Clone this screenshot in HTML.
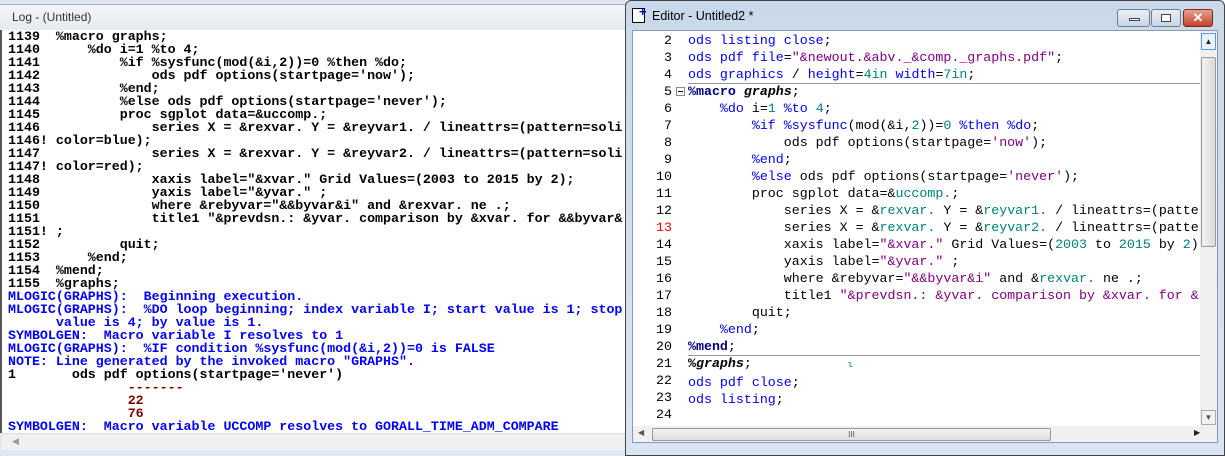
<!DOCTYPE html>
<html><head><meta charset="utf-8"><style>
*{margin:0;padding:0;box-sizing:border-box}
body{width:1225px;height:456px;overflow:hidden;background:#fff;position:relative;font-family:"Liberation Sans",sans-serif}
.abs{position:absolute}
.log div{font-family:"Liberation Mono",monospace;font-weight:bold;font-size:13.3px;line-height:13px;height:13px;white-space:pre;position:absolute;left:8px;color:#000}
.b{color:#0000ff!important}.r{color:#800000!important}
.ed{font-family:"Liberation Mono",monospace;font-size:13.3px;line-height:17px;white-space:pre;position:absolute;left:688px;top:32px;color:#000}
.gut{font-family:"Liberation Mono",monospace;font-size:13.3px;line-height:17px;white-space:pre;position:absolute;left:640px;top:32px;width:32px;text-align:right;color:#000}
.k{color:#0000ff}.s{color:#800080}.t{color:#008080}.m{color:#000080;font-weight:bold}.i{font-style:italic;font-weight:bold}
.btn{position:absolute;top:9px;height:18px;border:1px solid #6d7f96;border-radius:3px;background:linear-gradient(#eaf0f7,#c7d4e4)}
</style></head><body>
<div class="abs" style="left:0;top:0;width:626px;height:456px;background:#dfe7f0"></div>
<div class="abs" style="left:0;top:4px;width:626px;height:26px;background:linear-gradient(#f3f5f8,#e6eaef);border-top:1px solid #aab"></div>
<div class="abs" style="left:12px;top:10px;font-size:12px;color:#333">Log - (Untitled)</div>
<div class="abs" style="left:0;top:30px;width:626px;height:403px;background:#fff;border-left:2px solid #555"></div>
<div class="abs" style="left:2px;top:433px;width:624px;height:17px;background:#f0f0f0;border-top:1px solid #ddd"></div>
<div class="abs" style="left:12px;top:436px;font-size:9px;color:#999">◀</div>
<div class="log">
<div style="top:29.5px">1139  %macro graphs;</div>
<div style="top:42.5px">1140      %do i=1 %to 4;</div>
<div style="top:55.5px">1141          %if %sysfunc(mod(&amp;i,2))=0 %then %do;</div>
<div style="top:68.5px">1142              ods pdf options(startpage='now');</div>
<div style="top:81.5px">1143          %end;</div>
<div style="top:94.5px">1144          %else ods pdf options(startpage='never');</div>
<div style="top:107.5px">1145          proc sgplot data=&amp;uccomp.;</div>
<div style="top:120.5px">1146              series X = &amp;rexvar. Y = &amp;reyvar1. / lineattrs=(pattern=soli</div>
<div style="top:133.5px">1146! color=blue);</div>
<div style="top:146.5px">1147              series X = &amp;rexvar. Y = &amp;reyvar2. / lineattrs=(pattern=soli</div>
<div style="top:159.5px">1147! color=red);</div>
<div style="top:172.5px">1148              xaxis label="&amp;xvar." Grid Values=(2003 to 2015 by 2);</div>
<div style="top:185.5px">1149              yaxis label="&amp;yvar." ;</div>
<div style="top:198.5px">1150              where &amp;rebyvar="&amp;&amp;byvar&amp;i" and &amp;rexvar. ne .;</div>
<div style="top:211.5px">1151              title1 "&amp;prevdsn.: &amp;yvar. comparison by &amp;xvar. for &amp;&amp;byvar&amp;</div>
<div style="top:224.5px">1151! ;</div>
<div style="top:237.5px">1152          quit;</div>
<div style="top:250.5px">1153      %end;</div>
<div style="top:263.5px">1154  %mend;</div>
<div style="top:276.5px">1155  %graphs;</div>
<div class="b" style="top:289.5px">MLOGIC(GRAPHS):  Beginning execution.</div>
<div class="b" style="top:302.5px">MLOGIC(GRAPHS):  %DO loop beginning; index variable I; start value is 1; stop</div>
<div class="b" style="top:315.5px">      value is 4; by value is 1.</div>
<div class="b" style="top:328.5px">SYMBOLGEN:  Macro variable I resolves to 1</div>
<div class="b" style="top:341.5px">MLOGIC(GRAPHS):  %IF condition %sysfunc(mod(&amp;i,2))=0 is FALSE</div>
<div class="b" style="top:354.5px">NOTE: Line generated by the invoked macro "GRAPHS".</div>
<div style="top:367.5px">1       ods pdf options(startpage='never')</div>
<div class="r" style="top:380.5px">               -------</div>
<div class="r" style="top:393.5px">               22</div>
<div class="r" style="top:406.5px">               76</div>
<div class="b" style="top:419.5px">SYMBOLGEN:  Macro variable UCCOMP resolves to GORALL_TIME_ADM_COMPARE</div>
</div>

<div class="abs" style="left:625px;top:0;width:600px;height:456px;background:linear-gradient(#c9d9ea,#d9e5f1);border:1px solid #444;border-radius:6px 6px 0 0"></div>
<div class="abs" style="left:632px;top:8px;width:13px;height:15px;background:#fff;border:1px solid #000"></div>
<div class="abs" style="left:639px;top:4px;font-size:13px;font-weight:bold;color:#00c">+</div>
<div class="abs" style="left:652px;top:9px;font-size:12.5px;color:#000">Editor - Untitled2 *</div>
<div class="btn" style="left:1117px;width:33px"><div class="abs" style="left:11px;top:8px;width:11px;height:3px;background:#fff;border:1px solid #444"></div></div>
<div class="btn" style="left:1151px;width:30px"><div class="abs" style="left:9px;top:4px;width:10px;height:8px;background:#fff;border:1px solid #444"></div></div>
<div class="btn" style="left:1183px;width:30px;background:linear-gradient(#e8a08e,#c2432b);border-color:#7a2b1e;color:#fff;font-weight:bold;font-size:13px;text-align:center;line-height:16px">✕</div>
<div class="abs" style="left:632px;top:30px;width:586px;height:413px;background:#fff;border:1px solid #8a99ad"></div>
<div class="abs" style="left:1200px;top:31px;width:17px;height:395px;background:#f0f0f0"></div>
<div class="abs" style="left:1201px;top:33px;width:15px;height:17px;background:#e8f2fb;border:1px solid #5b9ad6;font-size:8px;text-align:center;line-height:15px;color:#123">▲</div>
<div class="abs" style="left:1201px;top:57px;width:15px;height:190px;background:linear-gradient(90deg,#f2f2f2,#dadada);border:1px solid #999;border-radius:2px"></div>
<div class="abs" style="left:1201px;top:410px;width:15px;height:15px;background:#f2f2f2;border:1px solid #aaa;font-size:8px;text-align:center;line-height:13px;color:#555">▼</div>
<div class="abs" style="left:633px;top:426px;width:584px;height:16px;background:#f0f0f0"></div>
<div class="abs" style="left:638px;top:428px;font-size:8px;color:#555">◀</div>
<div class="abs" style="left:1194px;top:428px;font-size:8px;color:#222">▶</div>
<div class="abs" style="left:652px;top:428px;width:399px;height:13px;background:linear-gradient(#f4f4f4,#dcdcdc);border:1px solid #999;border-radius:2px;font-size:8px;text-align:center;line-height:11px;color:#555">III</div>
<div class="abs" style="left:688px;top:83px;width:512px;height:1px;background:#999"></div>
<div class="abs" style="left:688px;top:355px;width:512px;height:1px;background:#999"></div>
<div class="abs" style="left:676px;top:87px;width:9px;height:9px;border:1px solid #888;background:#fff"><div class="abs" style="left:1px;top:3px;width:5px;height:1px;background:#000"></div></div>
<div class="gut">2
3
4
5
6
7
8
9
10
11
12
<span style="color:#f00">13</span>
14
15
16
17
18
19
20
21
22
23
24</div>
<div class="ed"><span class="k">ods listing close</span>;
<span class="k">ods pdf file</span>=<span class="s">"&amp;newout.&amp;abv._&amp;comp._graphs.pdf"</span>;
<span class="k">ods graphics</span> / <span class="k">height</span>=<span class="t">4in</span> <span class="k">width</span>=<span class="t">7in</span>;
<span class="m">%macro</span> <span class="i">graphs</span>;
    <span class="k">%do</span> i=<span class="t">1</span> <span class="k">%to</span> <span class="t">4</span>;
        <span class="k">%if</span> <span class="k">%sysfunc</span>(mod(&amp;i,<span class="t">2</span>))=<span class="t">0</span> <span class="k">%then</span> <span class="k">%do</span>;
            ods pdf options(startpage=<span class="s">'now'</span>);
        <span class="k">%end</span>;
        <span class="k">%else</span> ods pdf options(startpage=<span class="s">'never'</span>);
        proc sgplot data=&amp;<span class="t">uccomp.</span>;
            series X = &amp;<span class="t">rexvar.</span> Y = &amp;<span class="t">reyvar1.</span> / lineattrs=(patte
            series X = &amp;<span class="t">rexvar.</span> Y = &amp;<span class="t">reyvar2.</span> / lineattrs=(patte
            xaxis label=<span class="s">"&amp;xvar."</span> Grid Values=(<span class="t">2003</span> to <span class="t">2015</span> by <span class="t">2</span>)
            yaxis label=<span class="s">"&amp;yvar."</span> ;
            where &amp;rebyvar=<span class="s">"&amp;&amp;byvar&amp;i"</span> and &amp;<span class="t">rexvar.</span> ne .;
            title1 <span class="s">"&amp;prevdsn.: &amp;yvar. comparison by &amp;xvar. for &amp;</span>
        quit;
    <span class="k">%end</span>;
<span class="m">%mend</span>;
<span class="m" style="color:#000">%</span><span class="i">graphs</span>;            <span style="color:#080;font-size:9px">ι</span>
<span class="k">ods pdf close</span>;
<span class="k">ods listing</span>;
</div>
</body></html>
